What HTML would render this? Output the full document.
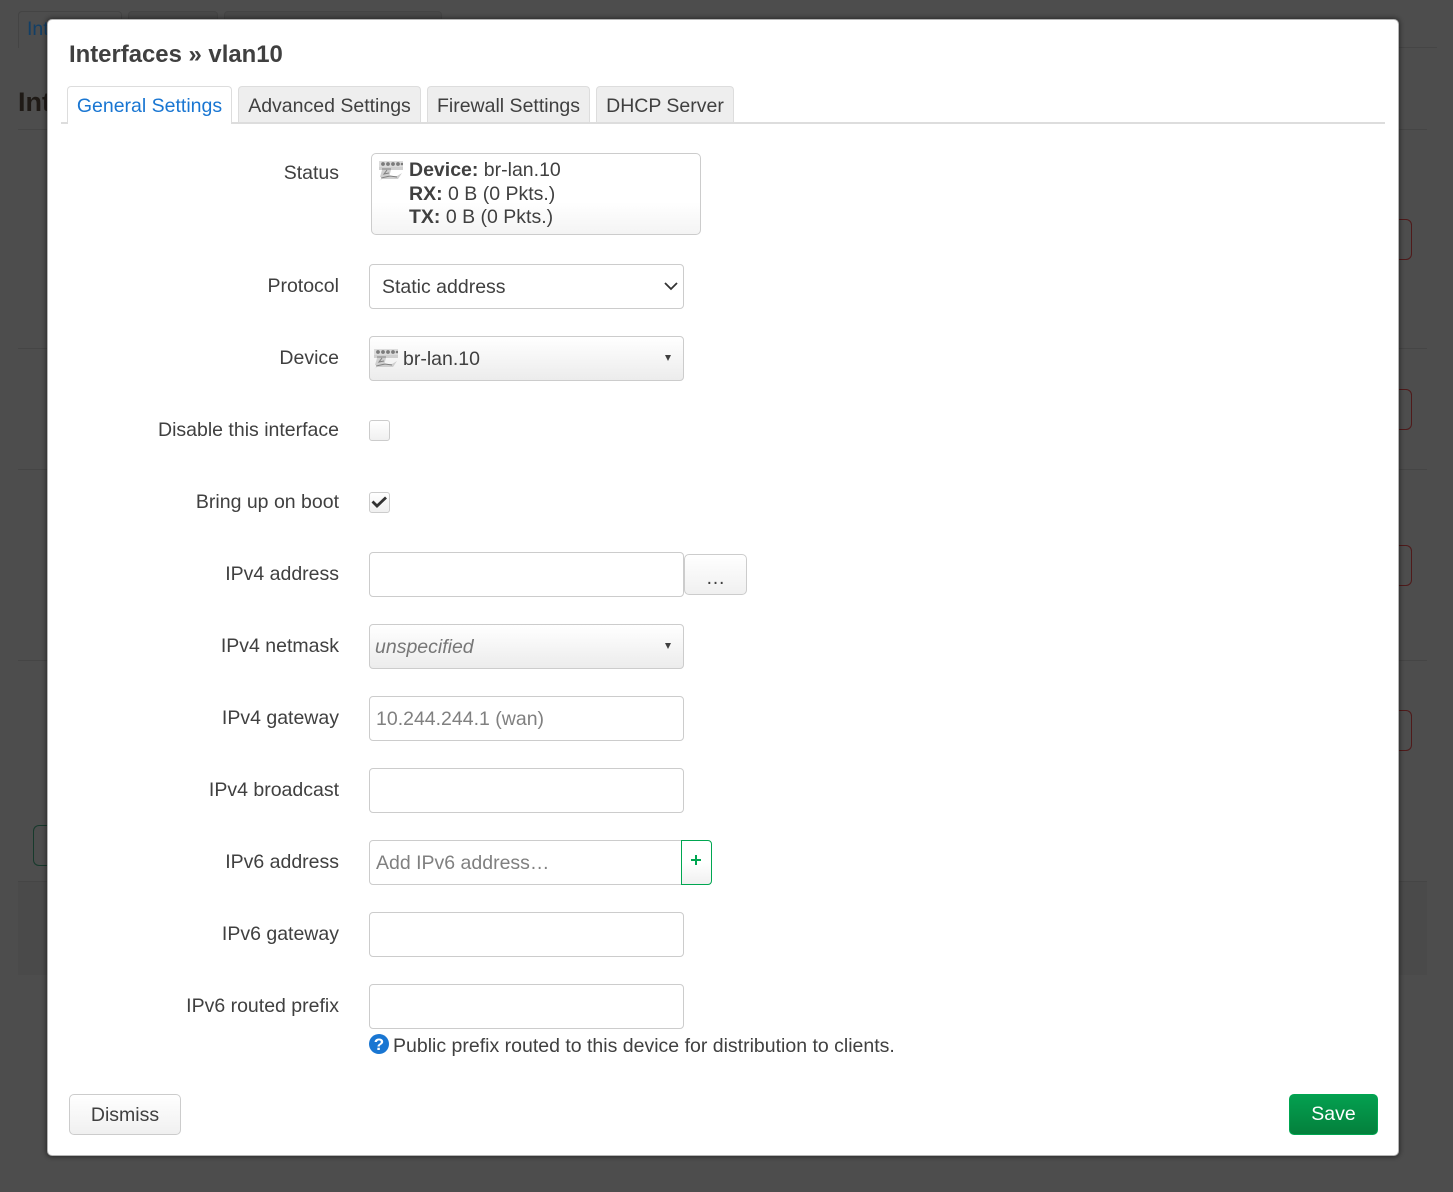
<!DOCTYPE html>
<html><head><meta charset="utf-8">
<style>
html,body{margin:0;padding:0}
body{width:1453px;height:1192px;position:relative;overflow:hidden;background:#4d4d4d;font-family:"Liberation Sans",sans-serif;font-size:19.5px;color:#404040}
.a{position:absolute;box-sizing:border-box;white-space:nowrap}
.l{position:absolute;right:1114px;white-space:nowrap;line-height:28px;color:#404040}
.i{position:absolute;box-sizing:border-box;left:369px;width:315px;height:45px;border:1px solid #ccc;border-radius:4px;background:#fff;line-height:45px;padding-left:6px}
.g{background:linear-gradient(#fff,#f0f0f0)}
.tab{position:absolute;box-sizing:border-box;top:86px;height:36px;background:#eee;border:1px solid #ddd;border-bottom:0;border-radius:4px 4px 0 0;line-height:39px;text-align:center;color:#404040}
.r{position:absolute;border:1px solid #4f1a1a;border-left:0;border-radius:0 6px 6px 0;left:1399px;width:13px;height:41px;box-sizing:border-box}
.h{position:absolute;height:1px;background:#454545;left:18px;width:1409px}
.ic{filter:blur(.35px)}
</style></head><body>
<div class="a" style="left:18px;top:11px;width:104px;height:37px;border:1px solid #444;border-bottom:0;border-radius:4px 4px 0 0"></div>
<div class="a" style="left:128px;top:11px;width:90px;height:37px;border:1px solid #444;border-bottom:0;border-radius:4px 4px 0 0;background:#484848"></div>
<div class="a" style="left:224px;top:11px;width:218px;height:37px;border:1px solid #444;border-bottom:0;border-radius:4px 4px 0 0;background:#484848"></div>
<div class="a" style="left:27px;top:17px;color:#123f66;line-height:24px">Int</div>
<div class="a" style="left:18px;top:86px;color:#1f1a16;font-weight:bold;font-size:27px;line-height:32px">Int</div>
<div class="h" style="top:47px;left:442px;width:995px"></div>
<div class="h" style="top:129px"></div>
<div class="h" style="top:348px"></div>
<div class="h" style="top:469px"></div>
<div class="h" style="top:660px"></div>
<div class="a" style="left:18px;top:881px;width:1409px;height:94px;background:#4a4a4a;border-top:1px solid #454545"></div>
<div class="r" style="top:219px"></div>
<div class="r" style="top:389px"></div>
<div class="r" style="top:545px"></div>
<div class="r" style="top:710px"></div>
<div class="a" style="left:33px;top:825px;width:20px;height:41px;border:1px solid #173a2c;border-right:0;border-radius:6px 0 0 6px"></div>

<div class="a" style="left:47px;top:19px;width:1352px;height:1137px;background:#fff;border:1px solid #b5b5b5;border-radius:5px;box-shadow:0 0 5px 1px rgba(0,0,0,.45)"></div>

<div class="a" style="left:69px;top:40px;font-size:23.9px;font-weight:bold;line-height:30px;color:#404040">Interfaces » vlan10</div>

<div class="a" style="left:61px;top:122px;width:1324px;height:2px;background:#ddd"></div>
<div class="tab" style="left:67px;width:165px;height:38px;background:#fff;color:#1976d2;z-index:2">General Settings</div>
<div class="tab" style="left:238px;width:183px">Advanced Settings</div>
<div class="tab" style="left:427px;width:163px">Firewall Settings</div>
<div class="tab" style="left:596px;width:138px">DHCP Server</div>

<div class="l" style="top:159px">Status</div>
<div class="l" style="top:272px">Protocol</div>
<div class="l" style="top:344px">Device</div>
<div class="l" style="top:416px">Disable this interface</div>
<div class="l" style="top:488px">Bring up on boot</div>
<div class="l" style="top:560px">IPv4 address</div>
<div class="l" style="top:632px">IPv4 netmask</div>
<div class="l" style="top:704px">IPv4 gateway</div>
<div class="l" style="top:776px">IPv4 broadcast</div>
<div class="l" style="top:848px">IPv6 address</div>
<div class="l" style="top:920px">IPv6 gateway</div>
<div class="l" style="top:992px">IPv6 routed prefix</div>

<div class="a" style="left:371px;top:153px;width:330px;height:82px;border:1px solid #ccc;border-radius:5px;background:linear-gradient(#fff 60%,#f4f4f4)"></div>
<svg class="a ic" style="left:379px;top:160px" width="24" height="22" viewBox="0 0 24 22"><rect x="0" y="1" width="24" height="9" fill="#dcdcdc"/><g fill="#7c7c7c"><circle cx="4" cy="4" r="1.9"/><circle cx="9" cy="4" r="1.9"/><circle cx="14" cy="4" r="1.9"/><circle cx="19" cy="4" r="1.9"/><circle cx="23" cy="4" r="1.3"/></g><path d="M0 7h24v3H12l-2 7H1l2-7H0zM0 21l6-5h12l5-3-4 6H3z" fill="#cfcfcf"/><path d="M3 9h9M8 10l-3 4 5-1M2 18l9-2 7 1" stroke="#808080" fill="none"/></svg>
<div class="a" style="left:409px;top:159px;line-height:23.5px;color:#404040"><b>Device:</b> br-lan.10<br><b>RX:</b> 0 B (0 Pkts.)<br><b>TX:</b> 0 B (0 Pkts.)</div>

<div class="i" style="top:264px;padding-left:12px">Static address</div>
<svg class="a" style="left:664px;top:281px" width="14" height="10" viewBox="0 0 14 10"><path d="M1 2l6 6 6-6" fill="none" stroke="#333" stroke-width="1.8"/></svg>

<div class="i g" style="top:336px;padding-left:33px;background:linear-gradient(#fff,#ececec)">br-lan.10</div>
<svg class="a ic" style="left:374px;top:348px" width="24" height="22" viewBox="0 0 24 22"><rect x="0" y="1" width="24" height="9" fill="#dcdcdc"/><g fill="#7c7c7c"><circle cx="4" cy="4" r="1.9"/><circle cx="9" cy="4" r="1.9"/><circle cx="14" cy="4" r="1.9"/><circle cx="19" cy="4" r="1.9"/><circle cx="23" cy="4" r="1.3"/></g><path d="M0 7h24v3H12l-2 7H1l2-7H0zM0 21l6-5h12l5-3-4 6H3z" fill="#cfcfcf"/><path d="M3 9h9M8 10l-3 4 5-1M2 18l9-2 7 1" stroke="#808080" fill="none"/></svg>
<svg class="a" style="left:664px;top:355px" width="8" height="7" viewBox="0 0 8 7"><path d="M1 0h6L4 6z" fill="#404040"/></svg>

<div class="a g" style="left:369px;top:420px;width:21px;height:21px;border:1px solid #ccc;border-radius:3px"></div>
<div class="a g" style="left:369px;top:492px;width:21px;height:21px;border:1px solid #ccc;border-radius:3px"></div>
<svg class="a" style="left:369px;top:492px" width="21" height="21" viewBox="0 0 21 21"><path d="M3.5 9.5l4.5 4.5 9-8.5" fill="none" stroke="#333" stroke-width="2.8"/></svg>

<div class="i" style="top:552px"></div>
<div class="a g" style="left:684px;top:554px;width:63px;height:41px;border:1px solid #ccc;border-radius:5px;text-align:center;line-height:46px;color:#404040">…</div>

<div class="i g" style="top:624px;font-style:italic;color:#777;padding-left:5px;background:linear-gradient(#fff,#ececec)">unspecified</div>
<svg class="a" style="left:664px;top:643px" width="8" height="7" viewBox="0 0 8 7"><path d="M1 0h6L4 6z" fill="#404040"/></svg>

<div class="i" style="top:696px;color:#808080">10.244.244.1 (wan)</div>
<div class="i" style="top:768px"></div>
<div class="i" style="top:840px;width:313px;color:#808080;border-radius:4px 0 0 4px">Add IPv6 address…</div>
<div class="a" style="left:681px;top:840px;width:31px;height:45px;border:1px solid #00a651;border-radius:0 4px 4px 0;background:linear-gradient(#fff 50%,#f0f0f0)"></div>
<svg class="a" style="left:691px;top:855px" width="10" height="10" viewBox="0 0 10 10"><path d="M0 5h10M5 0v10" stroke="#00a651" stroke-width="2"/></svg>
<div class="i" style="top:912px"></div>
<div class="i" style="top:984px"></div>

<svg class="a" style="left:369px;top:1034px" width="20" height="20" viewBox="0 0 20 20"><circle cx="10" cy="10" r="10" fill="#1976d2"/><text x="10" y="16" font-family="Liberation Sans" font-size="17" font-weight="bold" fill="#fff" text-anchor="middle">?</text></svg>
<div class="a" style="left:393px;top:1033px;line-height:26px;color:#404040">Public prefix routed to this device for distribution to clients.</div>

<div class="a g" style="left:69px;top:1094px;width:112px;height:41px;border:1px solid #ccc;border-radius:5px;text-align:center;line-height:40px;color:#404040">Dismiss</div>
<div class="a" style="left:1289px;top:1094px;width:89px;height:41px;border-radius:5px;border:1px solid #00a651;background:linear-gradient(#04a050,#04803c);text-align:center;line-height:39px;color:#fff">Save</div>
</body></html>
